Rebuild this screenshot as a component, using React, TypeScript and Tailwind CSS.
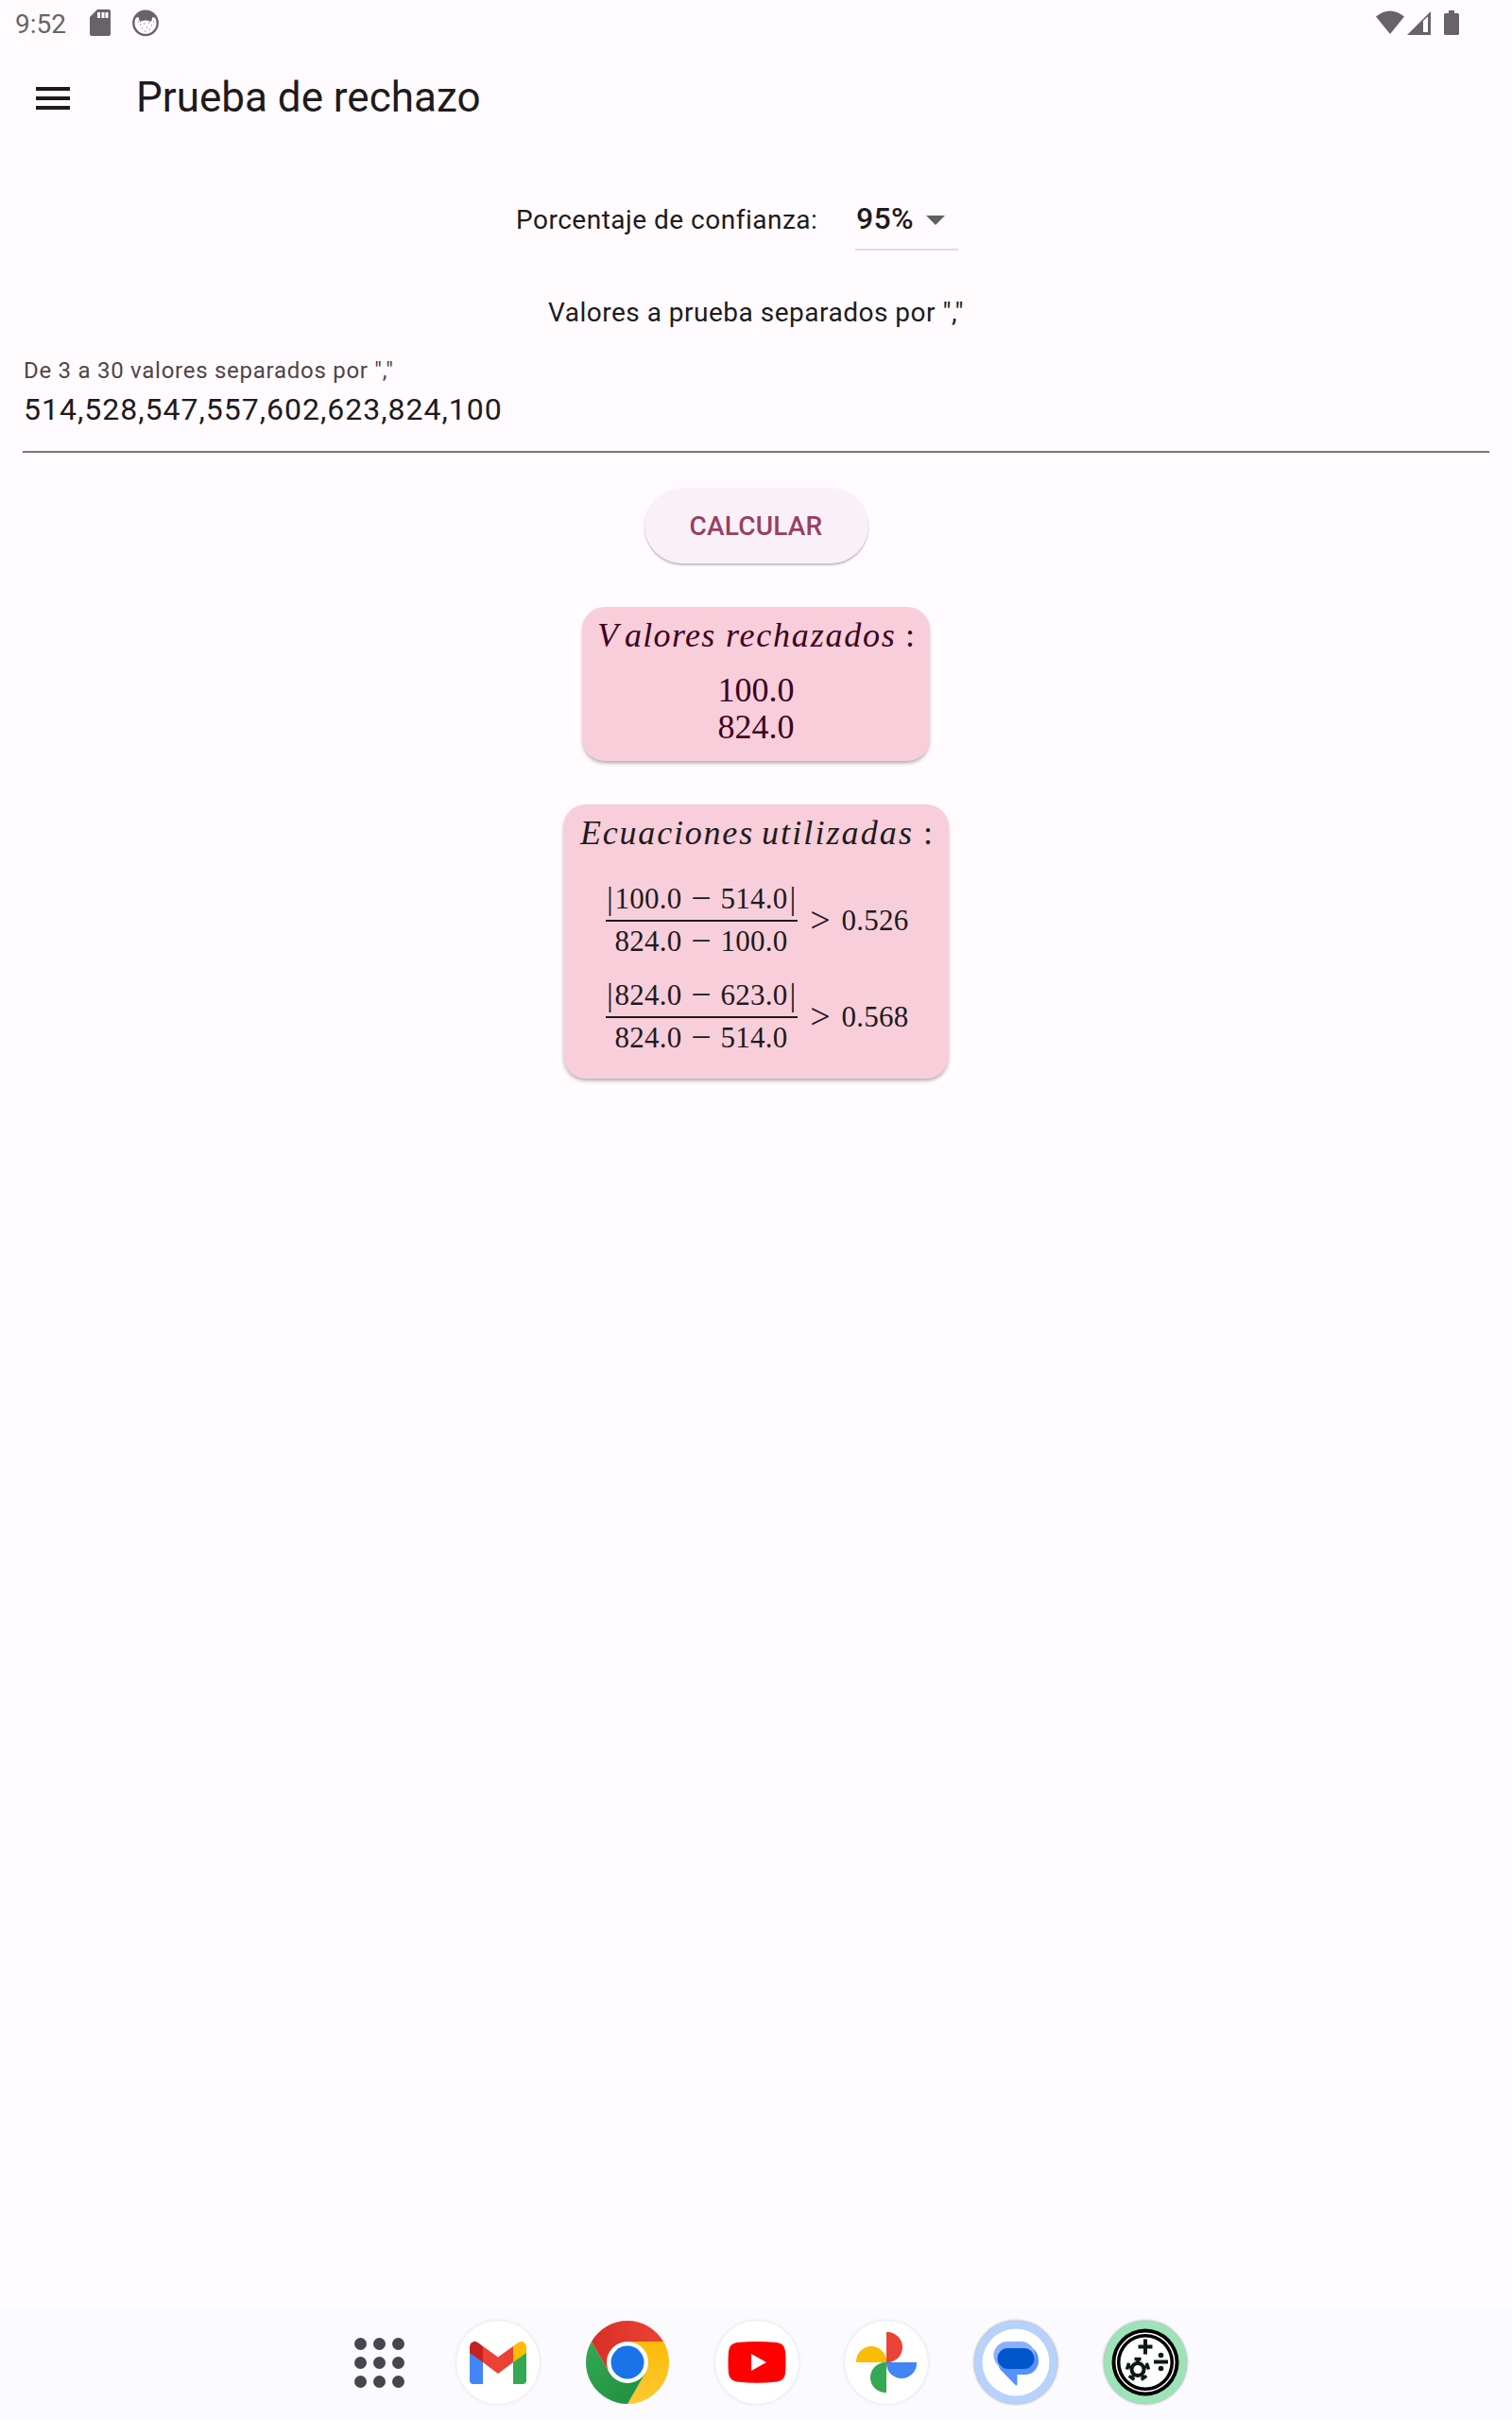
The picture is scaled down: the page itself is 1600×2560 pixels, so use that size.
import React from "react";

function StatusBar() {
  return (
    <div className="flex h-[50px] items-start">
      <span className="ml-4 mt-[9px] w-[56px] text-[28px] leading-[33px] text-[#676469]">9:52</span>
      <svg className="ml-[23px] mt-[10px]" width="22" height="28" viewBox="0 0 22 28">
        <path d="M8 0H20Q22 0 22 2V26Q22 28 20 28H2Q0 28 0 26V8Z" fill="#676469" />
        <path d="M8 3H11V9H8ZM12.500 3H15.500V9H12.500ZM16.500 3H19.500V9H16.500Z" fill="#fffbff" />
      </svg>
      <svg className="ml-[23px] mt-[10px]" width="28" height="29" viewBox="0 0 28 29">
        <circle cx="14" cy="14.300" r="12.700" fill="#fffbff" stroke="#676469" strokeWidth="2.400" />
        <path d="M3.500 9Q7 1.500 14 1.500Q21 1.500 24.500 9L21.500 8L20 13L17.500 12L14 11.500L10.500 12L8 13L6.500 8Z" fill="#676469" />
        <path d="M8 16h1M12 15h1M17 14h1M20 17h1M10 20h1M15 19h1M18 21h1M13 23h1M6 13h1M22 13h1" stroke="#676469" />
      </svg>
      <div className="ml-auto mr-[56px] mt-[11px] flex">
        <svg width="30" height="26" viewBox="0 0 30 26">
          <path d="M0 6.500Q15 -5.500 30 6.500L15 25Z" fill="#676469" />
        </svg>
        <svg className="ml-[3px]" width="25" height="26" viewBox="0 0 25 26">
          <path d="M25 1V26H0Z" fill="#676469" />
          <path d="M17 11L22 6.500V23H17Z" fill="#fffbff" />
        </svg>
        <svg className="ml-[14px]" width="16" height="26" viewBox="0 0 16 26">
          <path d="M5 0H11V3H14.500Q16 3 16 4.500V24.500Q16 26 14.500 26H1.500Q0 26 0 24.500V4.500Q0 3 1.500 3H5Z" fill="#676469" />
        </svg>
      </div>
    </div>
  );
}

function Fraction({ a, b, c, d, v }: { a: string; b: string; c: string; d: string; v: string }) {
  return (
    <div className="flex h-[102px] items-center text-[31px] leading-[41px] tracking-[0.300px] text-[#201a1b]">
      <div className="w-[203px]">
        <div className="flex h-[43px] items-start">
          <span className="w-[9px] text-center text-[34px]">|</span>
          <span className="w-[72px] text-center">{a}</span>
          <span className="w-[40px] text-center text-[38px]">−</span>
          <span className="w-[72px] text-center">{b}</span>
          <span className="w-[10px] text-center text-[34px]">|</span>
        </div>
        <div className="h-[1.500px] bg-[#201a1b]" />
        <div className="flex h-[43px] items-start pl-[9px]">
          <span className="w-[72px] text-center">{c}</span>
          <span className="w-[40px] text-center text-[38px]">−</span>
          <span className="w-[72px] text-center">{d}</span>
        </div>
      </div>
      <span className="-mt-[2px] ml-[12px] w-[24px] text-center text-[38px]">&gt;</span>
      <span className="-mt-[2px] ml-[10px] w-[72px] text-center">{v}</span>
    </div>
  );
}

const disc = "flex h-[88px] w-[88px] shrink-0 items-center justify-center rounded-full";

function Dock() {
  return (
    <div className="flex h-[120px] items-center bg-[#fafaff] pb-[1.500px] pl-[375px]">
      <div className="grid w-[53px] shrink-0 grid-cols-3 gap-[7px]">
        {Array.from({ length: 9 }, (_, i) => (
          <div key={i} className="h-[13px] w-[13px] rounded-full bg-[#45464f]" />
        ))}
      </div>
      <div className={disc + " ml-[54.500px] bg-white shadow-[0_0_4px_rgba(0,0,0,0.12)]"}>
        <svg width="60" height="45" viewBox="0 0 60 45">
          <path d="M0 11L14 21V45H4Q0 45 0 41Z" fill="#4285f4" />
          <path d="M60 11L46 21V45H56Q60 45 60 41Z" fill="#34a853" />
          <path d="M14 5L30 16.500L46 5V22L30 34L14 22Z" fill="#ea4335" />
          <path d="M0 12V6C0 0 6 -2 10 2L14 5V22Z" fill="#c5221f" />
          <path d="M60 12V6C60 0 54 -2 50 2L46 5V22Z" fill="#fbbc04" />
        </svg>
      </div>
      <div className={disc + " ml-[49px]"}>
        <svg width="88" height="88" viewBox="-44 -44 88 88">
          <defs>
            <linearGradient id="cr" x1="0" x2="1"><stop stopColor="#d93025" /><stop offset="1" stopColor="#ea4335" /></linearGradient>
            <linearGradient id="cy" x1="0" y1="1" x2="0" y2="0"><stop stopColor="#fcc934" /><stop offset="1" stopColor="#fbbc04" /></linearGradient>
            <linearGradient id="cg" x1="1" y1="1" x2="0" y2="0"><stop stopColor="#1e8e3e" /><stop offset="1" stopColor="#34a853" /></linearGradient>
          </defs>
          <path d="M0 -22H38.100A44 44 0 0 1 0 44L19.050 11Z" fill="url(#cy)" />
          <path d="M19.050 11L0 44A44 44 0 0 1 -38.100 -22L-19.050 11Z" fill="url(#cg)" />
          <path d="M-19.050 11L-38.100 -22A44 44 0 0 1 38.100 -22H0Z" fill="url(#cr)" />
          <circle r="22" fill="#fff" />
          <circle r="17.500" fill="#1a73e8" />
        </svg>
      </div>
      <div className={disc + " ml-[49px] bg-white shadow-[0_0_4px_rgba(0,0,0,0.12)]"}>
        <svg width="62" height="44" viewBox="0 0 62 44">
          <path d="M10 1Q31 -1 52 1Q60 2 61 10Q62 22 61 34Q60 41 52 42.500Q31 45 10 42.500Q2 41 1 34Q0 22 1 10Q2 2 10 1Z" fill="#f00" />
          <path d="M25 13L41 22L25 31Z" fill="#fff" />
        </svg>
      </div>
      <div className={disc + " ml-[49px] bg-white shadow-[0_0_4px_rgba(0,0,0,0.12)]"}>
        <svg width="64" height="64" viewBox="-32 -32 64 64">
          <path d="M0 0V-32A16 16 0 0 1 0 0Z" fill="#ea4335" />
          <path d="M0 0V-32H1A16 16 0 0 1 1 0Z" fill="#ea4335" />
          <path d="M0 0H32V1A16 16 0 0 1 0 1Z" fill="#4285f4" />
          <path d="M0 0V32H-1A16 16 0 0 1 -1 0Z" fill="#34a853" />
          <path d="M0 0H-32V-1A16 16 0 0 1 0 -1Z" fill="#fbbc04" />
        </svg>
      </div>
      <div className={disc + " ml-[49px] bg-[#b7d3fc] shadow-[0_0_3px_rgba(0,0,0,0.45)]"}>
        <svg width="72" height="72" viewBox="0 0 72 72">
          <circle cx="36" cy="36" r="35.500" fill="#fff" />
          <path d="M50 19.500Q60 23 60 34A14.500 14.500 0 0 1 46.500 49H37.500V59Q37 61 35.500 60L19 43L16 34Z" fill="#5890ff" />
          <rect x="12.500" y="14" width="43.500" height="29" rx="14.500" fill="#8ab0ff" />
          <path d="M16 38L22 46H40V42H20Z" fill="#5890ff" />
          <rect x="16.500" y="21" width="39" height="22" rx="11" fill="#0057cc" />
        </svg>
      </div>
      <div className={disc + " ml-[49px] bg-[#9de3b8] shadow-[0_0_3px_rgba(0,0,0,0.45)]"}>
        <svg width="72" height="72" viewBox="-36 -36 72 72">
          <circle r="35.500" fill="#000" />
          <circle r="30.800" fill="none" stroke="#fff" strokeWidth="1.500" />
          <circle r="26.500" fill="#fff" />
          <path d="M0 -24.500V-8.500M-7.500 -16.500H7.500" stroke="#0b1a10" strokeWidth="4" />
          <path d="M9 -0.500H24" stroke="#0b1a10" strokeWidth="4" />
          <circle cx="16.500" cy="-7.500" r="2.800" fill="#0b1a10" />
          <circle cx="16.500" cy="6.500" r="2.800" fill="#0b1a10" />
          <g transform="translate(-8 7.500)" stroke="#0b1a10" fill="none">
            <circle r="6.500" strokeWidth="4" />
            {[0, 72, 144, 216, 288].map((r) => (
              <path key={r} transform={`rotate(${r})`} d="M0 -7V-12M-3.500 -11H3.500" strokeWidth="3.500" />
            ))}
          </g>
        </svg>
      </div>
    </div>
  );
}

const card = "rounded-[24px] bg-[#f8ceda] shadow-[0_3px_4px_-1px_rgba(0,0,0,0.35)]";

export default function App() {
  return (
    <div className="flex h-[2560px] w-[1600px] flex-col overflow-hidden bg-[#fffbff] text-[#201a1b]" style={{ fontFamily: 'Roboto, sans-serif' }}>
      <StatusBar />
      <header className="flex h-[108px] items-start pl-[38px]">
        <div className="mt-[42px] flex w-[36px] flex-col gap-[6px]">
          <div className="h-1 bg-[#201a1b]" />
          <div className="h-1 bg-[#201a1b]" />
          <div className="h-1 bg-[#201a1b]" />
        </div>
        <h1 className="ml-[70px] mt-[27px] whitespace-nowrap text-[44px] leading-[52px]">Prueba de rechazo</h1>
      </header>
      <main className="flex flex-1 flex-col items-center">
        <div className="flex h-[108px] w-full items-start pl-[546px] pt-[47px]">
          <span className="mt-[11px] w-[359px] whitespace-nowrap text-[28px] leading-[34px] tracking-[0.500px]">Porcentaje de confianza:</span>
          <div className="flex h-[60px] w-[109px] items-start border-b-2 border-[#dfd9de]">
            <span className="mt-[8px] w-[75px] pl-px text-[32px] font-medium leading-[36px] tracking-[0.300px]">95%</span>
            <svg className="mt-[23px]" width="20" height="10" viewBox="0 0 20 10"><path d="M0 0H20L10 10Z" fill="#616161" /></svg>
          </div>
        </div>
        <p className="mt-[48px] text-[28px] leading-[34px] tracking-[0.500px]">Valores a prueba separados por ","</p>
        <div className="mt-[28px] h-[103px] w-[1552px] border-b-2 border-[#847377]">
          <div className="pl-px text-[24px] leading-[32px] tracking-[0.730px] text-[#514347]">De 3 a 30 valores separados por ","</div>
          <div className="mt-[7px] pl-px text-[32px] leading-[36px] tracking-[1px]">514,528,547,557,602,623,824,100</div>
        </div>
        <button className="mt-[37px] h-[80px] w-[237px] rounded-full bg-[#faf1f8] pt-[2px] text-[28px] font-medium tracking-[0.200px] text-[#984061] shadow-[0_2px_2px_rgba(0,0,0,0.25)]">CALCULAR</button>
        <section className={card + " mt-[46px] h-[163px] w-[368px] text-[#3e001d]"} style={{ fontFamily: '"Liberation Serif", serif' }}>
          <h2 className="flex h-[62px] whitespace-nowrap pl-[16px] pt-[9px] text-[36px] italic leading-[42px]">
            <span className="w-[29px]">V</span>
            <span className="w-[107px] tracking-[1.300px]">alores</span>
            <span className="w-[190px] tracking-[1.800px]">rechazados</span>
            <span className="not-italic">:</span>
          </h2>
          <div className="pt-[7px] text-center text-[36px] leading-[39px]">
            <div>100.0</div>
            <div>824.0</div>
          </div>
        </section>
        <section className={card + " mt-[46px] h-[290px] w-[408px]"} style={{ fontFamily: '"Liberation Serif", serif' }}>
          <h2 className="flex h-[72px] whitespace-nowrap pl-[18px] pt-[9px] text-[36px] italic leading-[42px]">
            <span className="w-[192px] tracking-[1.800px]">Ecuaciones</span>
            <span className="w-[171px] tracking-[2.100px]">utilizadas</span>
            <span className="not-italic">:</span>
          </h2>
          <div className="pl-[45px]">
            <Fraction a="100.0" b="514.0" c="824.0" d="100.0" v="0.526" />
            <Fraction a="824.0" b="623.0" c="824.0" d="514.0" v="0.568" />
          </div>
        </section>
      </main>
      <Dock />
    </div>
  );
}
